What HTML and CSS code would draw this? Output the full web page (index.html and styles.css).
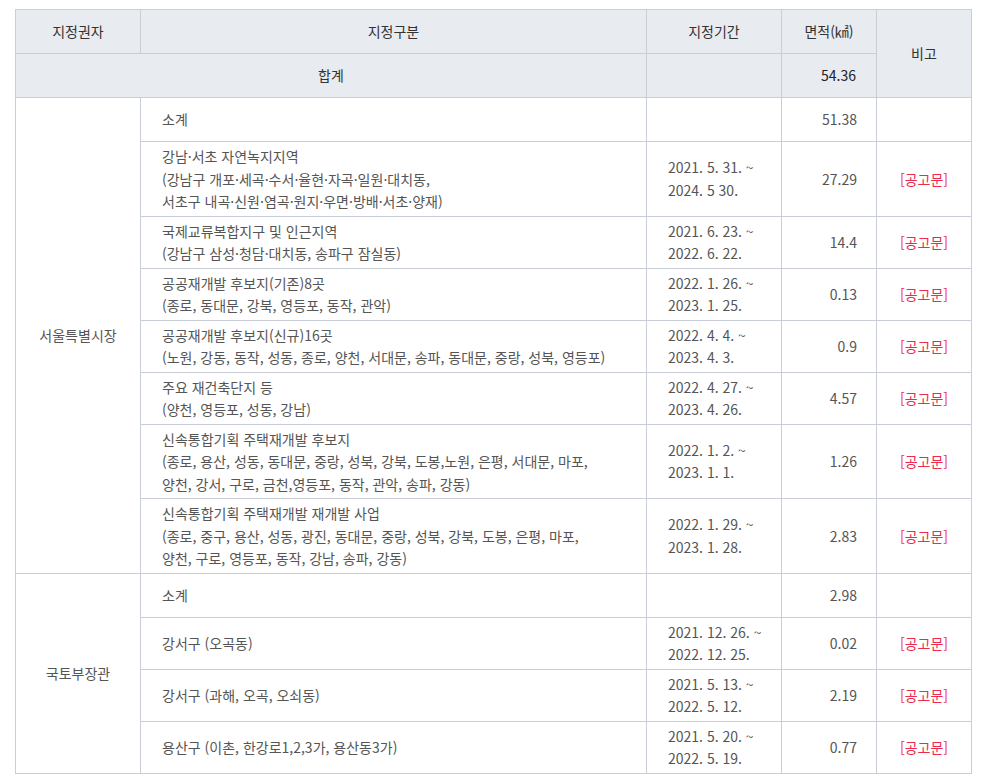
FILE: index.html
```html
<!DOCTYPE html>
<html lang="ko">
<head>
<meta charset="utf-8">
<title>토지거래허가구역 지정현황</title>
<link rel="stylesheet" href="styles.css">
</head>
<body>
<table class="zone-table">
  <colgroup>
    <col class="c-auth">
    <col class="c-area">
    <col class="c-period">
    <col class="c-size">
    <col class="c-note">
  </colgroup>
  <thead>
    <tr>
      <th>지정권자</th>
      <th>지정구분</th>
      <th>지정기간</th>
      <th>면적(㎢)</th>
      <th rowspan="2">비고</th>
    </tr>
    <tr class="total">
      <th colspan="2">합계</th>
      <th></th>
      <th class="num">54.36</th>
    </tr>
  </thead>
  <tbody>
    <tr>
      <td class="auth" rowspan="8">서울특별시장</td>
      <td class="desc">소계</td>
      <td></td>
      <td class="num">51.38</td>
      <td></td>
    </tr>
    <tr>
      <td class="desc">강남·서초 자연녹지지역<br>(강남구 개포·세곡·수서·율현·자곡·일원·대치동,<br>서초구 내곡·신원·염곡·원지·우면·방배·서초·양재)</td>
      <td class="date">2021. 5. 31. ~<br>2024. 5 30.</td>
      <td class="num">27.29</td>
      <td class="note"><a href="#">[공고문]</a></td>
    </tr>
    <tr>
      <td class="desc">국제교류복합지구 및 인근지역<br>(강남구 삼성·청담·대치동, 송파구 잠실동)</td>
      <td class="date">2021. 6. 23. ~<br>2022. 6. 22.</td>
      <td class="num">14.4</td>
      <td class="note"><a href="#">[공고문]</a></td>
    </tr>
    <tr>
      <td class="desc">공공재개발 후보지(기존)8곳<br>(종로, 동대문, 강북, 영등포, 동작, 관악)</td>
      <td class="date">2022. 1. 26. ~<br>2023. 1. 25.</td>
      <td class="num">0.13</td>
      <td class="note"><a href="#">[공고문]</a></td>
    </tr>
    <tr>
      <td class="desc">공공재개발 후보지(신규)16곳<br>(노원, 강동, 동작, 성동, 종로, 양천, 서대문, 송파, 동대문, 중랑, 성북, 영등포)</td>
      <td class="date">2022. 4. 4. ~<br>2023. 4. 3.</td>
      <td class="num">0.9</td>
      <td class="note"><a href="#">[공고문]</a></td>
    </tr>
    <tr>
      <td class="desc">주요 재건축단지 등<br>(양천, 영등포, 성동, 강남)</td>
      <td class="date">2022. 4. 27. ~<br>2023. 4. 26.</td>
      <td class="num">4.57</td>
      <td class="note"><a href="#">[공고문]</a></td>
    </tr>
    <tr>
      <td class="desc">신속통합기획 주택재개발 후보지<br>(종로, 용산, 성동, 동대문, 중랑, 성북, 강북, 도봉,노원, 은평, 서대문, 마포,<br>양천, 강서, 구로, 금천,영등포, 동작, 관악, 송파, 강동)</td>
      <td class="date">2022. 1. 2. ~<br>2023. 1. 1.</td>
      <td class="num">1.26</td>
      <td class="note"><a href="#">[공고문]</a></td>
    </tr>
    <tr>
      <td class="desc">신속통합기획 주택재개발 재개발 사업<br>(종로, 중구, 용산, 성동, 광진, 동대문, 중랑, 성북, 강북, 도봉, 은평, 마포,<br>양천, 구로, 영등포, 동작, 강남, 송파, 강동)</td>
      <td class="date">2022. 1. 29. ~<br>2023. 1. 28.</td>
      <td class="num">2.83</td>
      <td class="note"><a href="#">[공고문]</a></td>
    </tr>
    <tr>
      <td class="auth" rowspan="4">국토부장관</td>
      <td class="desc">소계</td>
      <td></td>
      <td class="num">2.98</td>
      <td></td>
    </tr>
    <tr>
      <td class="desc">강서구 (오곡동)</td>
      <td class="date">2021. 12. 26. ~<br>2022. 12. 25.</td>
      <td class="num">0.02</td>
      <td class="note"><a href="#">[공고문]</a></td>
    </tr>
    <tr>
      <td class="desc">강서구 (과해, 오곡, 오쇠동)</td>
      <td class="date">2021. 5. 13. ~<br>2022. 5. 12.</td>
      <td class="num">2.19</td>
      <td class="note"><a href="#">[공고문]</a></td>
    </tr>
    <tr>
      <td class="desc">용산구 (이촌, 한강로1,2,3가, 용산동3가)</td>
      <td class="date">2021. 5. 20. ~<br>2022. 5. 19.</td>
      <td class="num">0.77</td>
      <td class="note"><a href="#">[공고문]</a></td>
    </tr>
  </tbody>
</table>
</body>
</html>
```

FILE: styles.css
```css
html, body {
  margin: 0;
  padding: 0;
  background: #ffffff;
}

body {
  padding: 9px 12px 0 15px;
  font-family: "Noto Sans CJK KR", "Noto Sans", sans-serif;
  font-size: 14px;
  color: #555555;
}

.zone-table {
  width: 956px;
  border-collapse: collapse;
  table-layout: fixed;
  border: 1px solid #c9cdd7;
}

.c-auth { width: 125px; }
.c-area { width: 506px; }
.c-period { width: 135px; }
.c-size { width: 95px; }
.c-note { width: 95px; }

.zone-table th,
.zone-table td {
  border: 1px solid #c9cdd7;
  height: 44px;
  padding: 3px 20px 3px;
  line-height: 22.5px;
  vertical-align: middle;
  box-sizing: border-box;
}

.zone-table th {
  background: #e8ebf0;
  color: #333333;
  font-weight: normal;
  text-align: center;
}

.zone-table th.num {
  text-align: right;
  color: #222222;
}

.zone-table td {
  text-align: left;
  color: #555555;
}

.zone-table td.auth {
  text-align: center;
  padding-left: 10px;
  padding-right: 10px;
}

.zone-table td.desc {
  padding-left: 21px;
}

.zone-table td.date {
  padding-left: 21px;
  padding-right: 6px;
}

.zone-table td.num {
  text-align: right;
  padding-right: 19px;
}

.zone-table td.note {
  text-align: center;
  padding-left: 4px;
  padding-right: 4px;
}

.note a {
  color: #ee2a4f;
  text-decoration: none;
}
```
